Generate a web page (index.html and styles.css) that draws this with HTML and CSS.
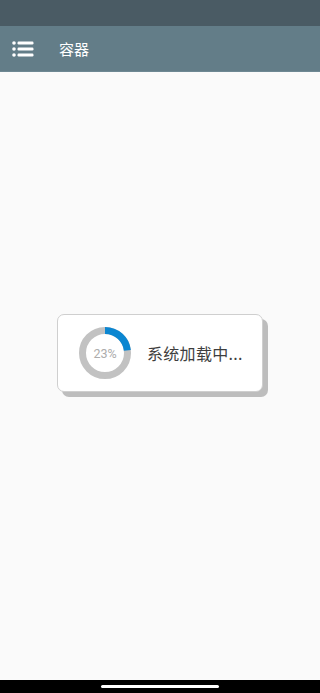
FILE: index.html
```html
<!DOCTYPE html>
<html lang="zh">
<head>
<meta charset="utf-8">
<link rel="stylesheet" href="styles.css">
</head>
<body>
<div class="app">
  <div class="status-bar"></div>
  <header class="header">
    <svg class="menu-icon" width="22" height="16" viewBox="0 0 22 16">
      <circle cx="2" cy="2" r="1.8" fill="#fff"/>
      <circle cx="2" cy="8" r="1.8" fill="#fff"/>
      <circle cx="2" cy="14" r="1.8" fill="#fff"/>
      <rect x="5.5" y="0.6" width="16" height="2.8" rx="1.2" fill="#fff"/>
      <rect x="5.5" y="6.6" width="16" height="2.8" rx="1.2" fill="#fff"/>
      <rect x="5.5" y="12.6" width="16" height="2.8" rx="1.2" fill="#fff"/>
    </svg>
    <span class="title">容器</span>
  </header>
  <main class="main">
    <div class="card">
      <div class="ring">
        <svg width="52" height="52" viewBox="0 0 52 52">
          <circle cx="26" cy="26" r="22.5" fill="none" stroke="#c2c2c2" stroke-width="7"/>
          <circle cx="26" cy="26" r="22.5" fill="none" stroke="#0b86d1" stroke-width="7"
            stroke-dasharray="32.5 200" transform="rotate(-90 26 26)"/>
        </svg>
        <span class="pct">23%</span>
      </div>
      <span class="loading">系统加载中...</span>
    </div>
  </main>
  <div class="nav-bar"><div class="home-indicator"></div></div>
</div>
</body>
</html>
```
FILE: styles.css
```css
html, body {
  margin: 0;
  padding: 0;
}
body {
  font-family: "Noto Sans CJK SC", "Noto Sans", sans-serif;
  background: #fafafa;
}
.app {
  width: 320px;
  height: 693px;
  display: flex;
  flex-direction: column;
  overflow: hidden;
}
.status-bar {
  height: 26px;
  background: #4a5b64;
  flex: none;
}
.header {
  height: 46px;
  background: #637d88;
  display: flex;
  align-items: center;
  padding-left: 12px;
  box-sizing: border-box;
  flex: none;
  border-bottom: 1px solid #6e8893;
}
.menu-icon {
  display: block;
  margin-top: 1px;
}
.title {
  margin-left: 25px;
  color: #fff;
  font-size: 15px;
  line-height: 20px;
}
.main {
  flex: 1;
  display: flex;
  justify-content: center;
  align-items: flex-start;
  padding-top: 242px;
  background: #fafafa;
}
.card {
  width: 206px;
  height: 78px;
  box-sizing: border-box;
  background: #fff;
  border: 1px solid #cfcfcf;
  border-radius: 7px;
  box-shadow: 5px 5px 0 #bdbdbd;
  display: flex;
  align-items: center;
  padding-left: 21px;
}
.ring {
  position: relative;
  width: 52px;
  height: 52px;
  flex: none;
}
.ring svg {
  display: block;
}
.pct {
  position: absolute;
  inset: 0;
  display: flex;
  align-items: center;
  justify-content: center;
  font-family: "Roboto", "Noto Sans", sans-serif;
  font-size: 12.5px;
  color: #acacac;
}
.loading {
  margin-left: 16px;
  font-size: 16px;
  color: #3e3e3e;
  letter-spacing: 0.3px;
}
.nav-bar {
  height: 13px;
  background: #000;
  flex: none;
  display: flex;
  justify-content: center;
  align-items: center;
}
.home-indicator {
  width: 118px;
  height: 3px;
  background: #fff;
  border-radius: 2px;
}
```
